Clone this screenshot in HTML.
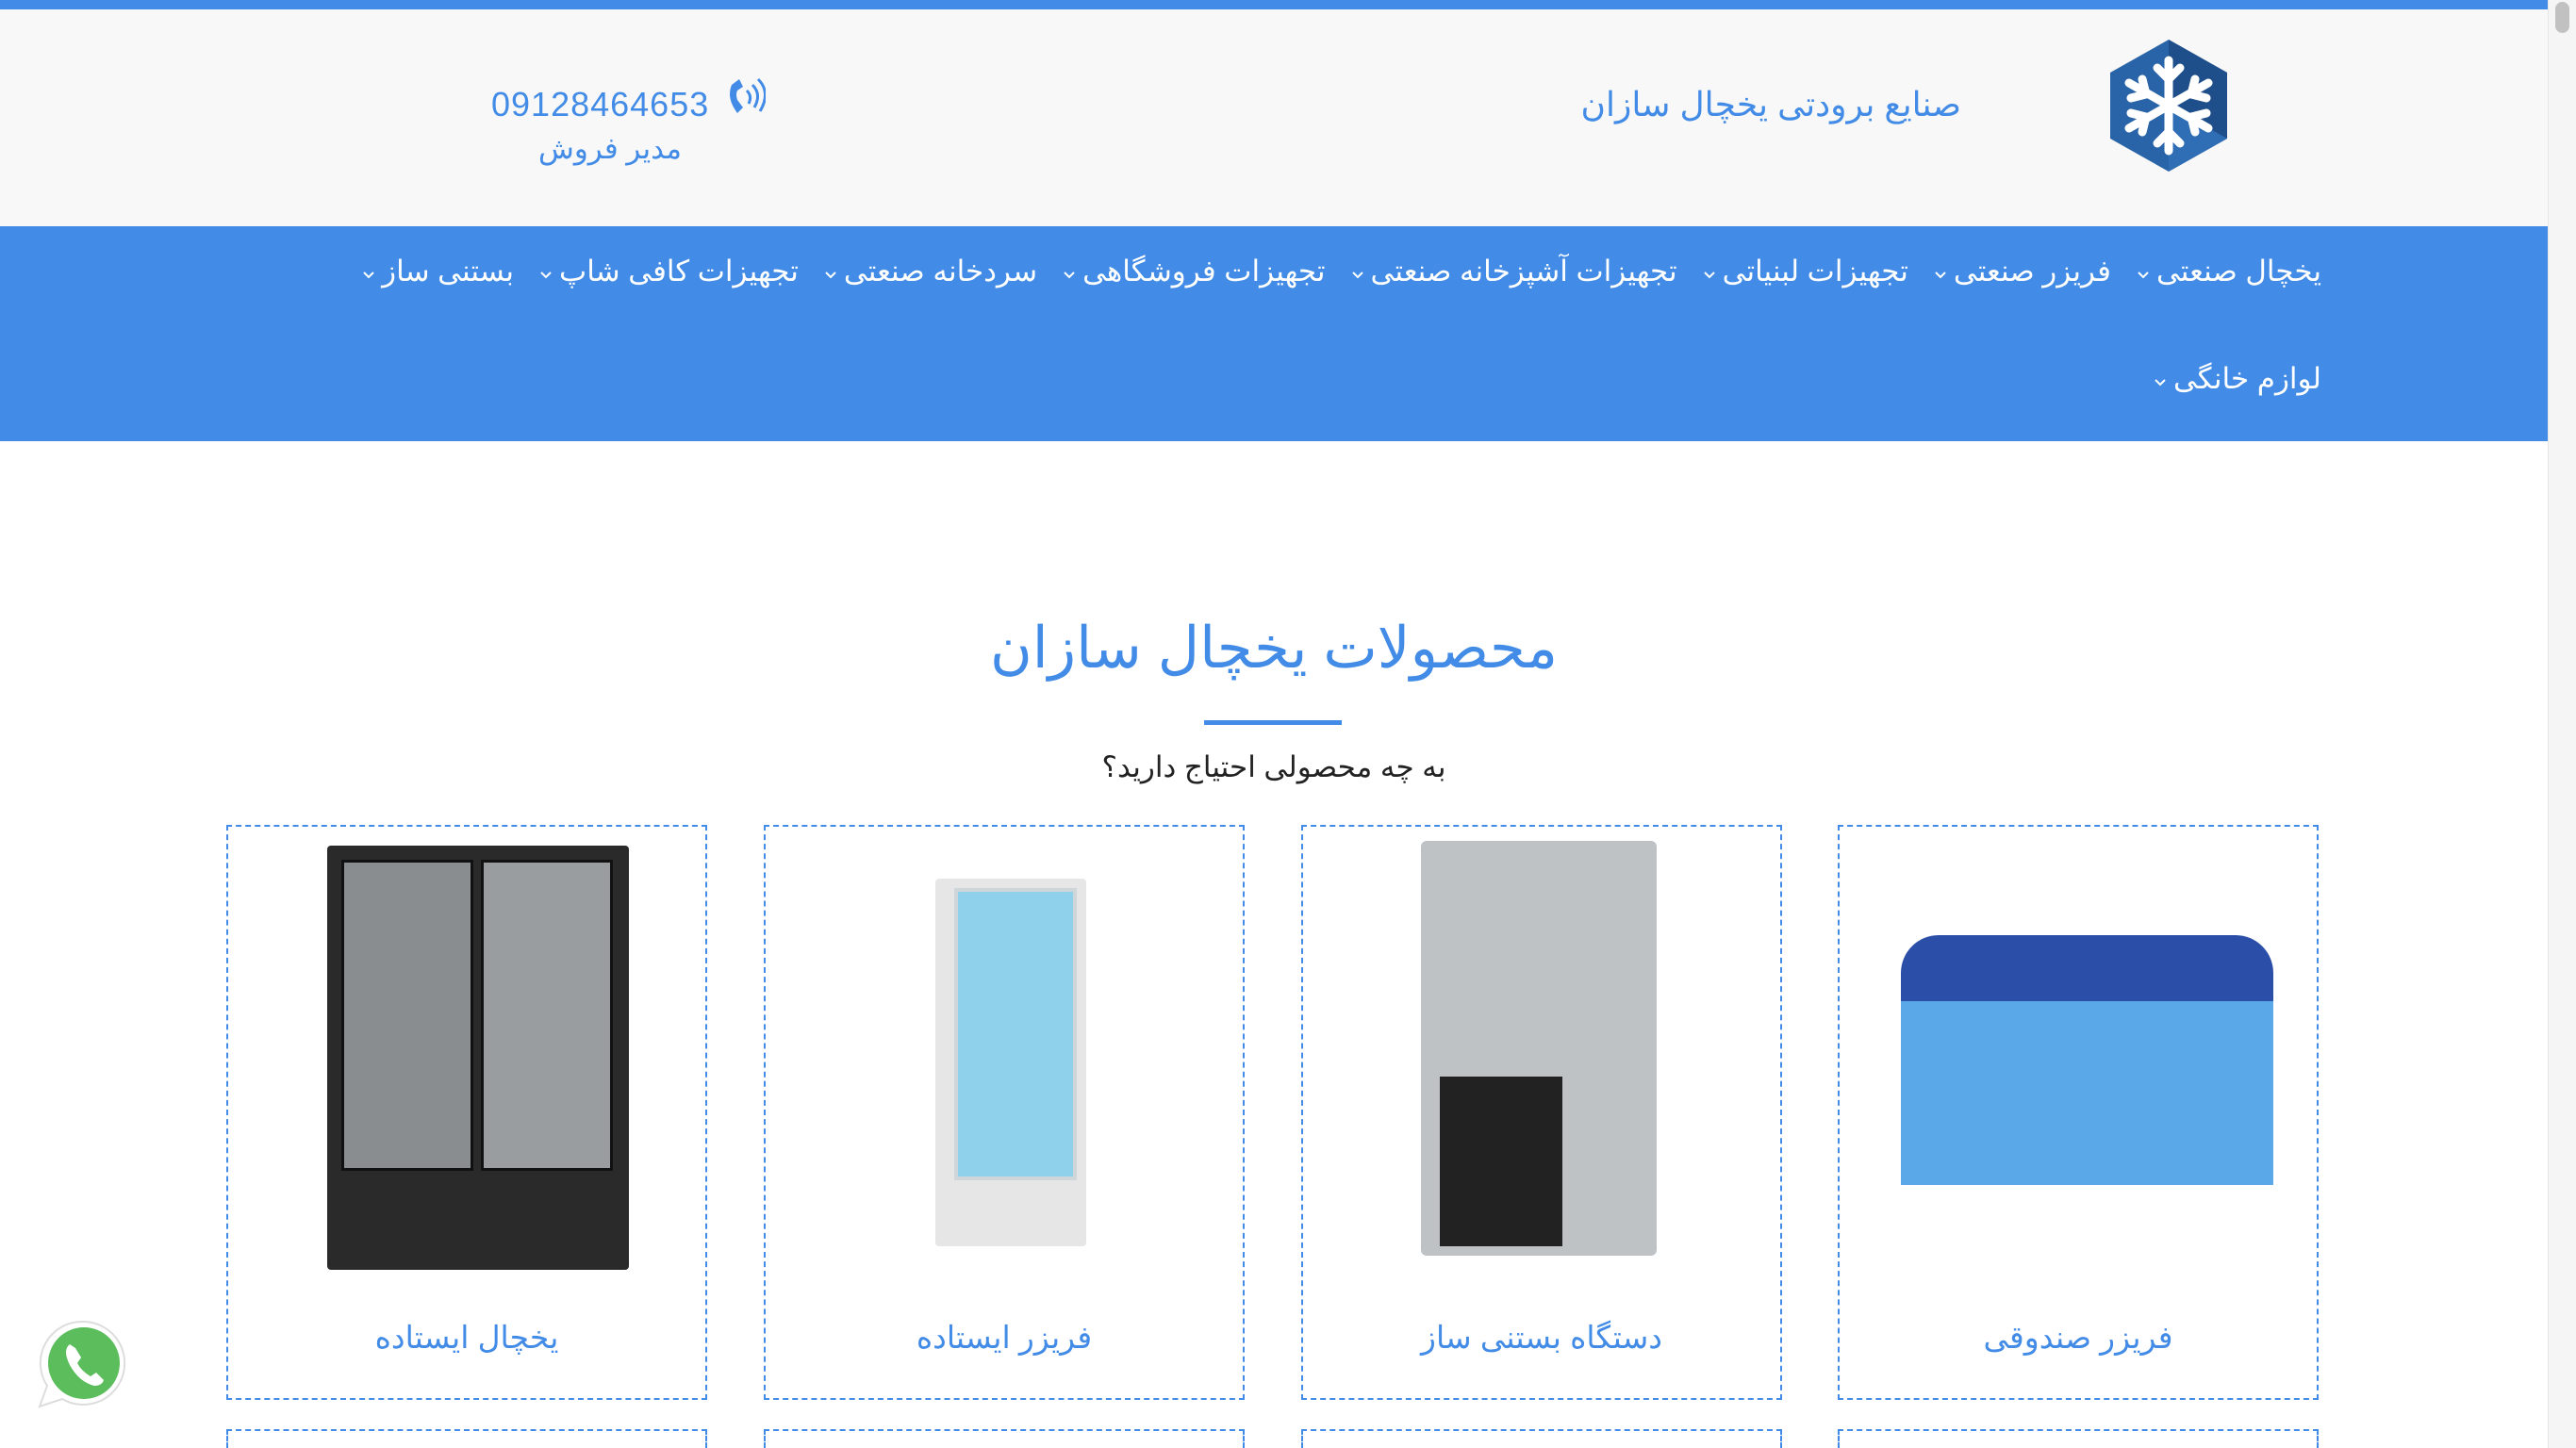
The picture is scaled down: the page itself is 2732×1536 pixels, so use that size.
<!DOCTYPE html>
<html><head><meta charset="utf-8"><style>
*{margin:0;padding:0;box-sizing:border-box}
html,body{width:2732px;height:1536px;overflow:hidden}
body{background:#fff;font-family:"Liberation Sans","Noto Sans CJK SC",sans-serif;position:relative}
.abs{position:absolute}
.top{left:0;top:0;width:2702px;height:10px;background:#428be6}
.hdr{left:0;top:10px;width:2702px;height:230px;background:#f8f8f8}
.nav{left:0;top:240px;width:2702px;height:228px;background:#428be6}
.sb{left:2702px;top:0;width:30px;height:1536px;background:#f5f5f5;border-left:1px solid #e6e6e6}
.thumb{left:2710px;top:2px;width:15px;height:33px;background:#c1c1c1;border-radius:8px}
.nv{color:#fff;font-size:31px;white-space:nowrap;direction:rtl;display:flex;align-items:center;gap:8px}
.nv svg{margin-top:8px}
.card{width:510px;height:610px;border:2px dashed #428be6;top:875px}
.lbl{width:100%;text-align:center;top:522px;color:#428be6;font-size:33px;direction:rtl}
</style></head><body>
<div class="abs top"></div>
<div class="abs hdr"></div>
<div class="abs nav"></div>
<div class="abs sb"></div><div class="abs thumb"></div>

<svg class="abs" style="left:2238px;top:42px" width="124" height="140" viewBox="0 0 124 140">
<polygon points="62,0 124,35 124,105 62,140 0,105 0,35" fill="#2a64a8"/>
<polygon points="62,0 124,35 124,105 62,70" fill="#1f4f8a"/>
<polygon points="62,70 124,105 62,140" fill="#2f6db4"/>
<g stroke="#fff" stroke-width="9" stroke-linecap="round" fill="none">
<line x1="62" y1="22" x2="62" y2="118"/><line x1="20" y1="46" x2="104" y2="94"/><line x1="20" y1="94" x2="104" y2="46"/>
<path d="M50 30 L62 42 L74 30 M50 110 L62 98 L74 110 M22 62 L38 58 L34 42 M102 78 L86 82 L90 98 M22 78 L38 82 L34 98 M102 62 L86 58 L90 42"/>
</g></svg>

<div class="abs" style="right:652px;top:90px;font-size:36px;color:#428be6;direction:rtl">صنایع برودتی یخچال سازان</div>
<div class="abs" style="left:521px;top:90px;font-size:36px;color:#428be6;letter-spacing:1px">09128464653</div>
<svg class="abs" style="left:770px;top:82px" width="42" height="48" viewBox="0 0 42 48"><path d="M6 8 q-6 14 6 30 l6 -6 -6 -8 q-2 -6 0 -10 l6 -4 -4 -8z" fill="#428be6"/><path d="M22 14 q6 6 2 14 M28 8 q10 10 2 24 M34 2 q14 14 2 34" stroke="#428be6" stroke-width="3" fill="none"/></svg>
<div class="abs" style="left:571px;top:140px;font-size:31px;color:#428be6;direction:rtl">مدیر فروش</div>

<div class="abs" style="right:270px;top:270px;display:flex;direction:rtl;gap:28px">
<span class="nv">یخچال صنعتی<svg width="12" height="8"><path d="M1 1l5 5 5-5" stroke="#fff" stroke-width="2" fill="none"/></svg></span>
<span class="nv">فریزر صنعتی<svg width="12" height="8"><path d="M1 1l5 5 5-5" stroke="#fff" stroke-width="2" fill="none"/></svg></span>
<span class="nv">تجهیزات لبنیاتی<svg width="12" height="8"><path d="M1 1l5 5 5-5" stroke="#fff" stroke-width="2" fill="none"/></svg></span>
<span class="nv">تجهیزات آشپزخانه صنعتی<svg width="12" height="8"><path d="M1 1l5 5 5-5" stroke="#fff" stroke-width="2" fill="none"/></svg></span>
<span class="nv">تجهیزات فروشگاهی<svg width="12" height="8"><path d="M1 1l5 5 5-5" stroke="#fff" stroke-width="2" fill="none"/></svg></span>
<span class="nv">سردخانه صنعتی<svg width="12" height="8"><path d="M1 1l5 5 5-5" stroke="#fff" stroke-width="2" fill="none"/></svg></span>
<span class="nv">تجهیزات کافی شاپ<svg width="12" height="8"><path d="M1 1l5 5 5-5" stroke="#fff" stroke-width="2" fill="none"/></svg></span>
<span class="nv">بستنی ساز<svg width="12" height="8"><path d="M1 1l5 5 5-5" stroke="#fff" stroke-width="2" fill="none"/></svg></span>
</div>
<div class="abs" style="right:270px;top:384px;display:flex;direction:rtl"><span class="nv">لوازم خانگی<svg width="12" height="8"><path d="M1 1l5 5 5-5" stroke="#fff" stroke-width="2" fill="none"/></svg></span></div>

<div class="abs" style="left:0;width:2702px;text-align:center;top:652px;font-size:61px;color:#428be6;direction:rtl">محصولات یخچال سازان</div>
<div class="abs" style="left:1277px;top:764px;width:146px;height:5px;background:#428be6"></div>
<div class="abs" style="left:0;width:2702px;text-align:center;top:796px;font-size:31px;color:#222;direction:rtl">به چه محصولی احتیاج دارید؟</div>

<div class="abs card" style="left:240px">
 <div class="abs" style="left:105px;top:20px;width:320px;height:450px;background:#2a2a2a;border-radius:4px"></div>
 <div class="abs" style="left:120px;top:35px;width:140px;height:330px;background:#8a8d90;border:3px solid #111"></div>
 <div class="abs" style="left:268px;top:35px;width:140px;height:330px;background:#9a9da0;border:3px solid #111"></div>
 <div class="lbl abs">یخچال ایستاده</div></div>
<div class="abs card" style="left:810px">
 <div class="abs" style="left:180px;top:55px;width:160px;height:390px;background:#e6e6e6;border-radius:4px"></div>
 <div class="abs" style="left:200px;top:65px;width:130px;height:310px;background:#8fd0ea;border:4px solid #cfd6da"></div>
 <div class="lbl abs">فریزر ایستاده</div></div>
<div class="abs card" style="left:1380px">
 <div class="abs" style="left:125px;top:15px;width:250px;height:440px;background:#bfc2c5;border-radius:6px"></div>
 <div class="abs" style="left:145px;top:265px;width:130px;height:180px;background:#222"></div>
 <div class="lbl abs">دستگاه بستنی ساز</div></div>
<div class="abs card" style="left:1949px">
 <div class="abs" style="left:65px;top:115px;width:395px;height:80px;background:#2b4fa8;border-radius:40px 40px 0 0"></div>
 <div class="abs" style="left:65px;top:185px;width:395px;height:195px;background:#5aa8e8"></div>
 <div class="lbl abs">فریزر صندوقی</div></div>

<div class="abs card" style="left:240px;top:1516px;height:20px;border-bottom:none"></div>
<div class="abs card" style="left:810px;top:1516px;height:20px;border-bottom:none"></div>
<div class="abs card" style="left:1380px;top:1516px;height:20px;border-bottom:none"></div>
<div class="abs card" style="left:1949px;top:1516px;height:20px;border-bottom:none"></div>

<svg class="abs" style="left:38px;top:1398px" width="100" height="100" viewBox="0 0 100 100">
<path d="M50 4 a44 44 0 1 1 -22 82 l-24 8 8 -22 a44 44 0 0 1 38 -68z" fill="#fff" stroke="#ddd" stroke-width="2"/>
<circle cx="51" cy="48" r="38" fill="#5cbd5c"/>
<path d="M36 28 q-8 6 0 22 q10 18 26 22 q8 0 10 -6 l-8 -8 -6 4 q-10 -6 -14 -14 l4 -6 -6 -10z" fill="#fff"/>
</svg>
</body></html>
